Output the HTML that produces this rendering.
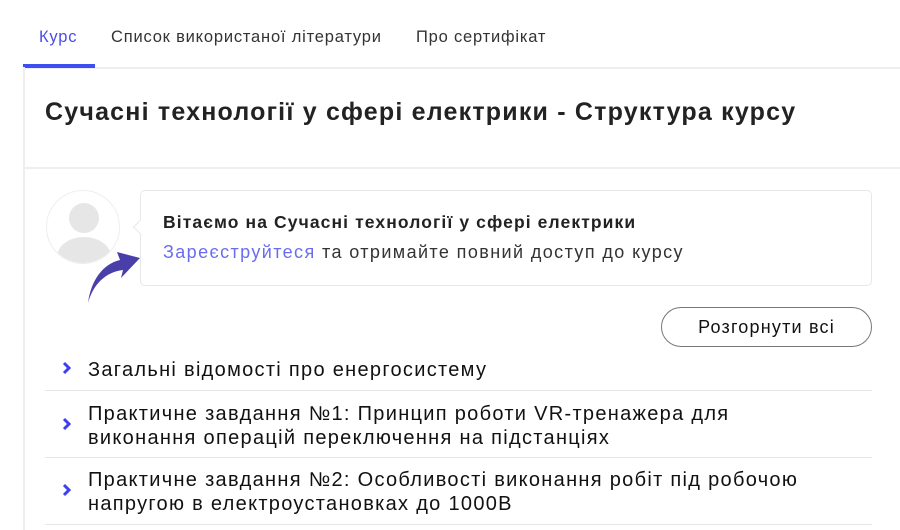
<!DOCTYPE html>
<html><head><meta charset="utf-8"><style>
*{margin:0;padding:0;box-sizing:border-box}
body{width:900px;height:530px;background:#fff;font-family:"Liberation Sans",sans-serif;color:#222;position:relative;overflow:hidden}
.a{position:absolute}
.tab{top:28px;font-size:16.5px;letter-spacing:0.8px;color:#333;white-space:nowrap}
.item{left:88px;font-size:20px;letter-spacing:1.3px;line-height:24px;color:#111;white-space:nowrap}
.chev{left:61px}
.div{left:45px;width:827px;height:1px;background:#e6e6e6}
</style></head><body>
<div class="a tab" style="left:39px;color:#4a4ee6">Курс</div>
<div class="a tab" style="left:111px">Список використаної літератури</div>
<div class="a tab" style="left:416px">Про сертифікат</div>
<div class="a" style="left:23px;top:67px;width:877px;height:2px;background:#eee"></div>
<div class="a" style="left:23px;top:64px;width:72px;height:4px;background:#3d4ff0"></div>
<div class="a" style="left:23px;top:67px;width:2px;height:463px;background:#eee"></div>
<div class="a" style="left:23px;top:167px;width:877px;height:2px;background:#eee"></div>
<div class="a" style="left:45px;top:98px;font-size:25px;letter-spacing:1.2px;font-weight:bold;color:#222;white-space:nowrap">Сучасні технології у сфері електрики - Структура курсу</div>
<div class="a" style="left:46px;top:190px;width:74px;height:74px;border-radius:50%;border:1px solid #eee;overflow:hidden">
<div class="a" style="left:22px;top:12px;width:30px;height:30px;border-radius:50%;background:#e6e6e6"></div>
<div class="a" style="left:10px;top:46px;width:54px;height:40px;border-radius:50%;background:#e6e6e6"></div>
</div>
<div class="a" style="left:140px;top:190px;width:732px;height:96px;border:1px solid #e8e8e8;border-radius:5px"></div>
<div class="a" style="left:135px;top:222px;width:10px;height:10px;background:#fff;border-left:1px solid #e8e8e8;border-bottom:1px solid #e8e8e8;transform:rotate(45deg)"></div>
<div class="a" style="left:163px;top:212px;font-size:17.5px;letter-spacing:1.1px;font-weight:bold;white-space:nowrap">Вітаємо на Сучасні технології у сфері електрики</div>
<div class="a" style="left:163px;top:242px;font-size:18px;letter-spacing:1.4px;white-space:nowrap;color:#333"><span style="color:#6a6cf0">Зареєструйтеся</span> та отримайте повний доступ до курсу</div>
<svg class="a" style="left:85px;top:250px" width="60" height="55" viewBox="0 0 60 55"><path d="M3 53 C8 35 20 22 38 20 L36 28 L55 8 L32 2 L35 10 C18 14 6 30 3 53Z" fill="#4a3fa8"/></svg>
<div class="a" style="left:661px;top:307px;width:211px;height:40px;border:1px solid #777;border-radius:20px;font-size:18px;letter-spacing:1.2px;text-align:center;line-height:38px;color:#111">Розгорнути всі</div>
<svg class="a chev" style="top:361px" width="12" height="14" viewBox="0 0 12 14"><path d="M3 2 L8 7 L3 12" stroke="#3d3ff0" stroke-width="3" fill="none"/></svg>
<div class="a item" style="top:358px">Загальні відомості про енергосистему</div>
<div class="a div" style="top:390px"></div>
<svg class="a chev" style="top:417px" width="12" height="14" viewBox="0 0 12 14"><path d="M3 2 L8 7 L3 12" stroke="#3d3ff0" stroke-width="3" fill="none"/></svg>
<div class="a item" style="top:402px">Практичне завдання №1: Принцип роботи VR-тренажера для<br>виконання операцій переключення на підстанціях</div>
<div class="a div" style="top:457px"></div>
<svg class="a chev" style="top:483px" width="12" height="14" viewBox="0 0 12 14"><path d="M3 2 L8 7 L3 12" stroke="#3d3ff0" stroke-width="3" fill="none"/></svg>
<div class="a item" style="top:468px">Практичне завдання №2: Особливості виконання робіт під робочою<br>напругою в електроустановках до 1000В</div>
<div class="a div" style="top:524px"></div>
</body></html>
